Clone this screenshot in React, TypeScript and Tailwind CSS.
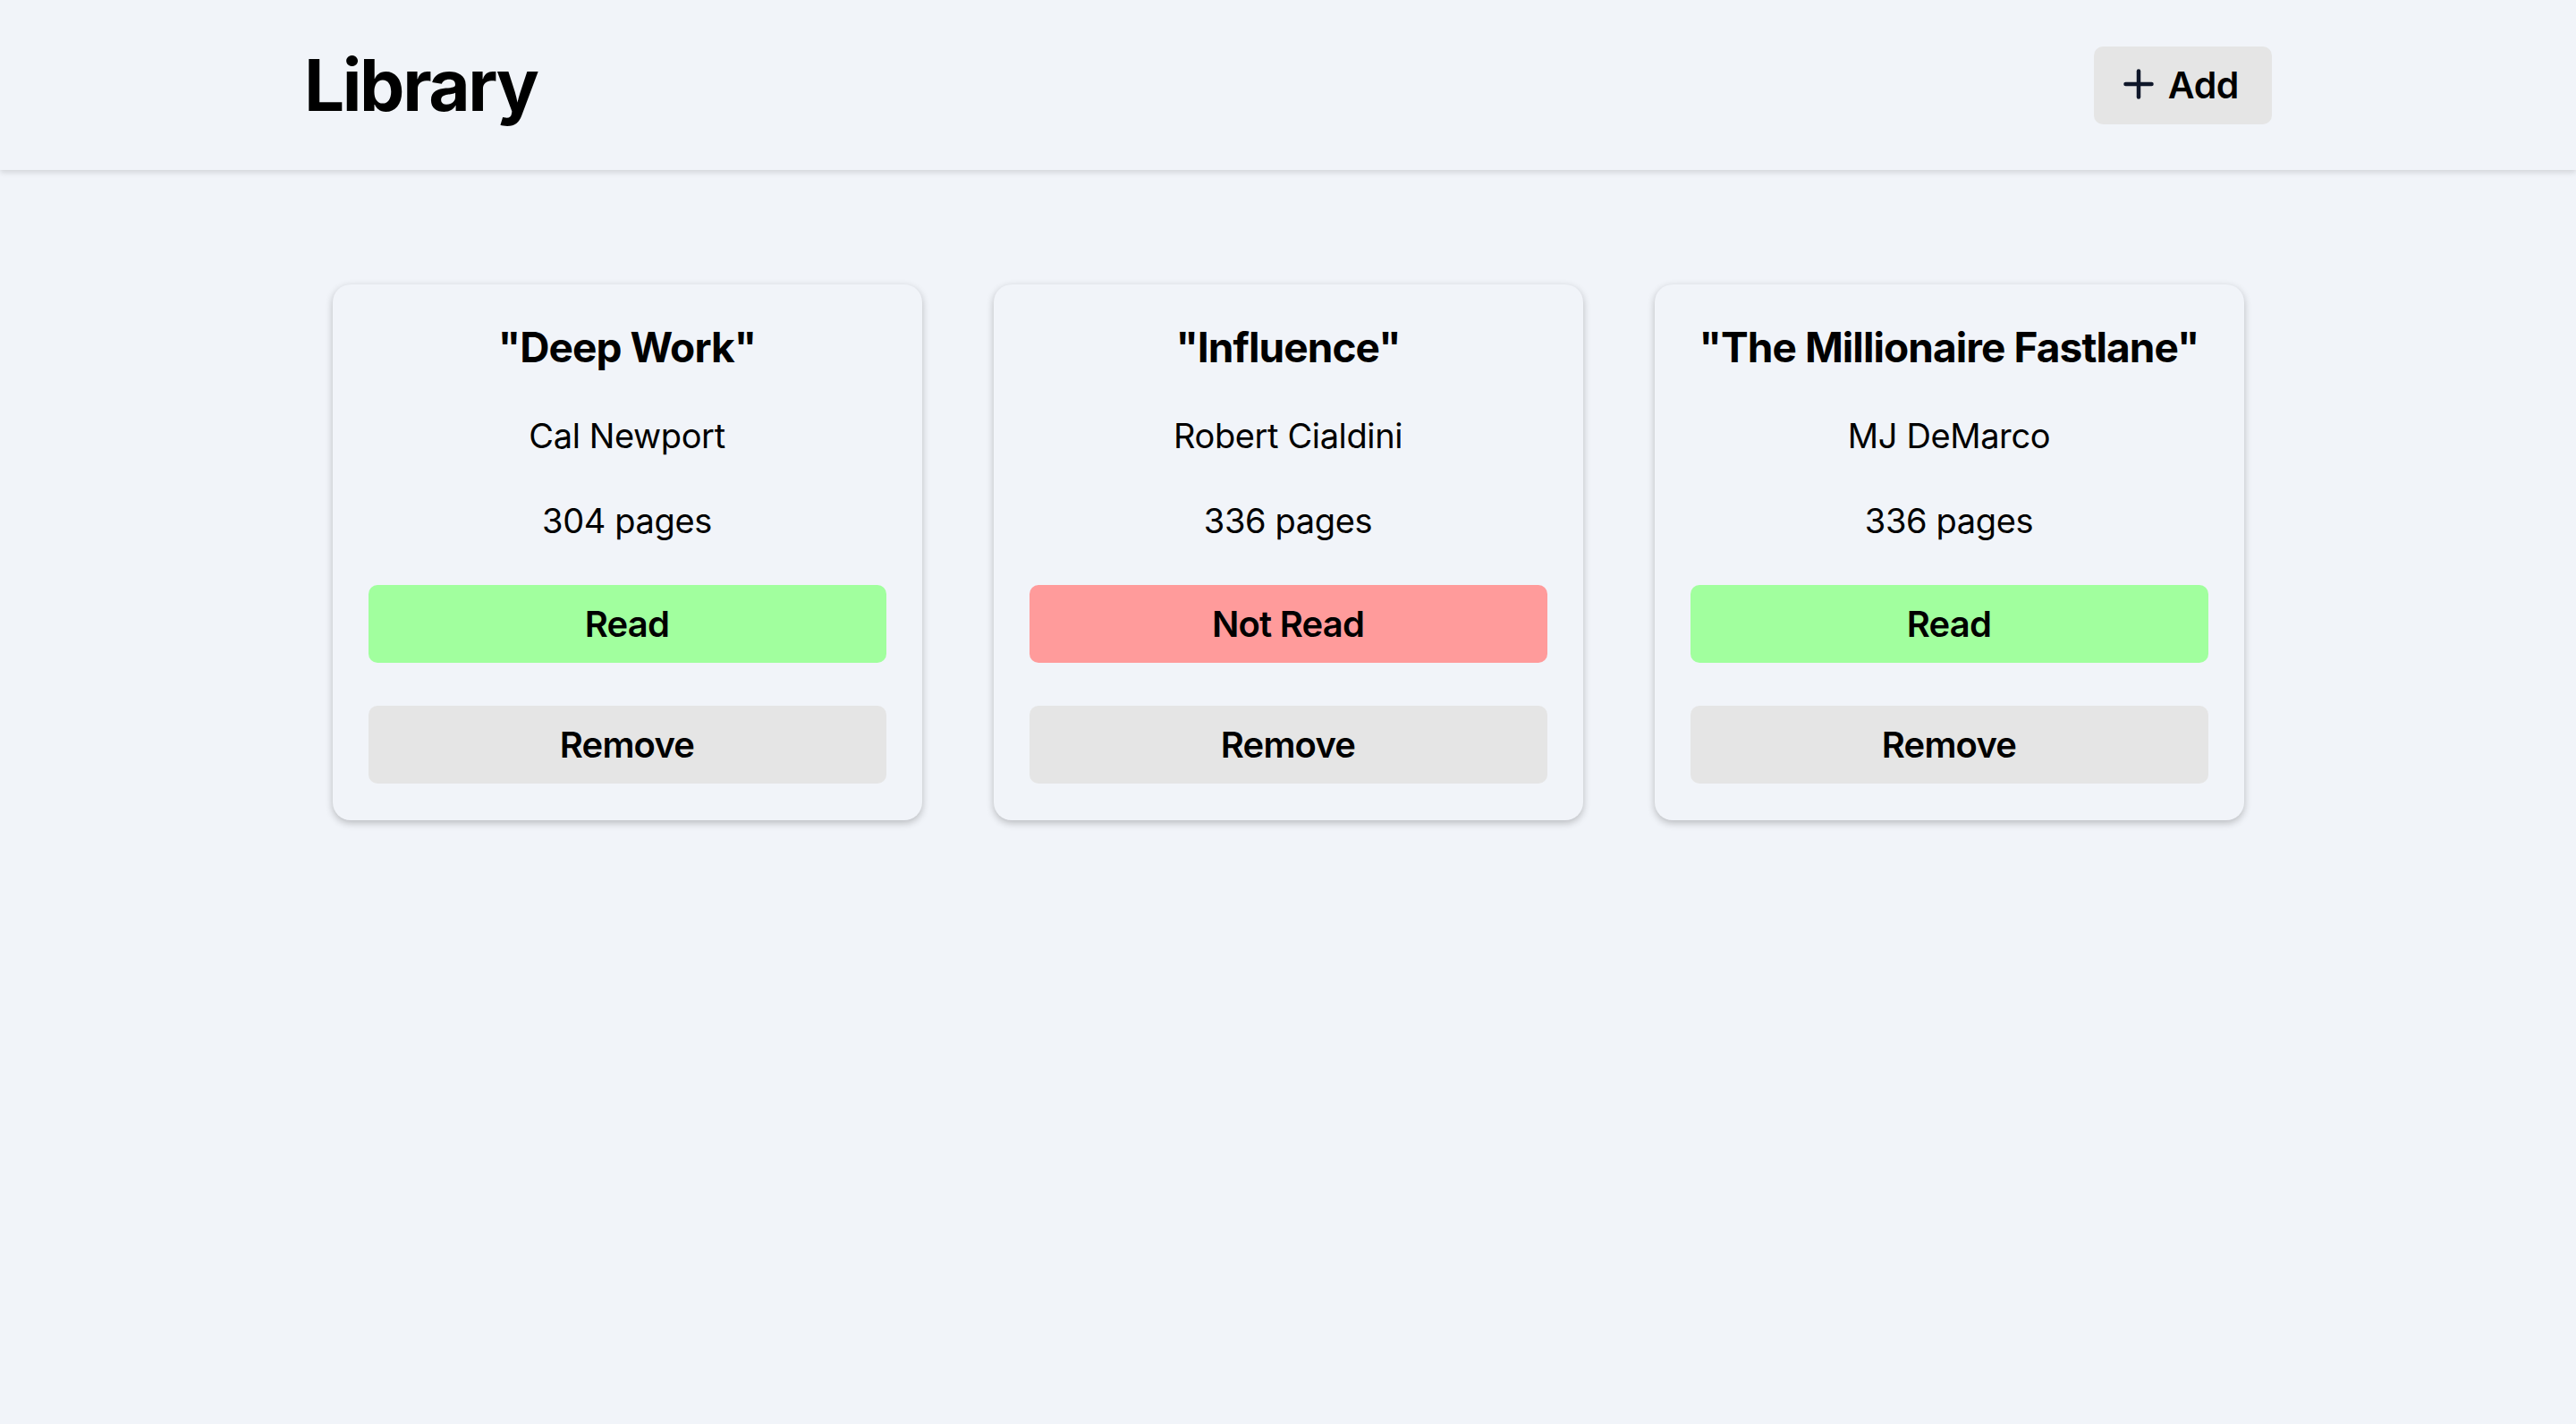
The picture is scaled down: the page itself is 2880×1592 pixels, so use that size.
type Book = {
  title: string;
  author: string;
  pages: number;
  read: boolean;
};

const books: Book[] = [
  { title: "Deep Work", author: "Cal Newport", pages: 304, read: true },
  { title: "Influence", author: "Robert Cialdini", pages: 336, read: false },
  { title: "The Millionaire Fastlane", author: "MJ DeMarco", pages: 336, read: true },
];

function PlusIcon() {
  return (
    <svg width="34" height="34" viewBox="0 0 34 34" fill="none" stroke="#0f172a" strokeWidth="4.5" strokeLinecap="round">
      <path d="M17 2.5v29" />
      <path d="M2.5 17h29" />
    </svg>
  );
}

function BookCard({ book }: { book: Book }) {
  return (
    <div className="flex flex-col items-center gap-12 rounded-[20px] bg-[#f1f4f9] px-10 pb-[41px] pt-[42px] text-center text-black shadow-[0_3px_9px_rgba(0,0,0,0.24)]">
      <h2 className="whitespace-nowrap text-[46px] font-bold leading-[56px] tracking-[-0.02em]">"{book.title}"</h2>
      <p className="text-[38px] leading-[46px] tracking-[-0.01em]">{book.author}</p>
      <p className="text-[38px] leading-[48px] tracking-[-0.01em]">{book.pages} pages</p>
      <div className="flex w-full flex-col gap-12">
        <button
          className={
            book.read
              ? "flex h-[87px] w-full items-center justify-center rounded-[10px] bg-[#a1ff9e] text-[40px] font-semibold tracking-[-0.02em] text-black"
              : "flex h-[87px] w-full items-center justify-center rounded-[10px] bg-[#ff9b9b] text-[40px] font-semibold tracking-[-0.02em] text-black"
          }
        >
          {book.read ? "Read" : "Not Read"}
        </button>
        <button className="flex h-[87px] w-full items-center justify-center rounded-[10px] bg-[#e5e5e5] text-[40px] font-semibold tracking-[-0.02em] text-black">
          Remove
        </button>
      </div>
    </div>
  );
}

export default function App() {
  return (
    <div className="min-h-screen w-full bg-[#f1f4f9] font-['Inter','Liberation_Sans',sans-serif]">
      {/* Header */}
      <header className="relative z-10 h-[190px] bg-[#f1f4f9] shadow-[0_3px_6px_rgba(0,0,0,0.12)]">
        <div className="mx-auto flex h-full w-[2200px] items-center justify-between">
          <h1 className="text-[80px] font-bold tracking-[-0.03em] text-black">Library</h1>
          <button className="flex h-[87px] items-center gap-[16px] rounded-[10px] bg-[#e5e5e5] pb-[2px] pl-[33px] pr-[37px] text-[41px] font-semibold tracking-[-0.01em] text-black">
            <PlusIcon />
            <span className="pt-[3px]">Add</span>
          </button>
        </div>
      </header>

      {/* Cards */}
      <main className="pt-[128px]">
        <div className="mx-auto grid w-[2137px] grid-cols-3 items-start gap-[80px]">
          {books.map((b) => (
            <BookCard key={b.title} book={b} />
          ))}
        </div>
      </main>
    </div>
  );
}
